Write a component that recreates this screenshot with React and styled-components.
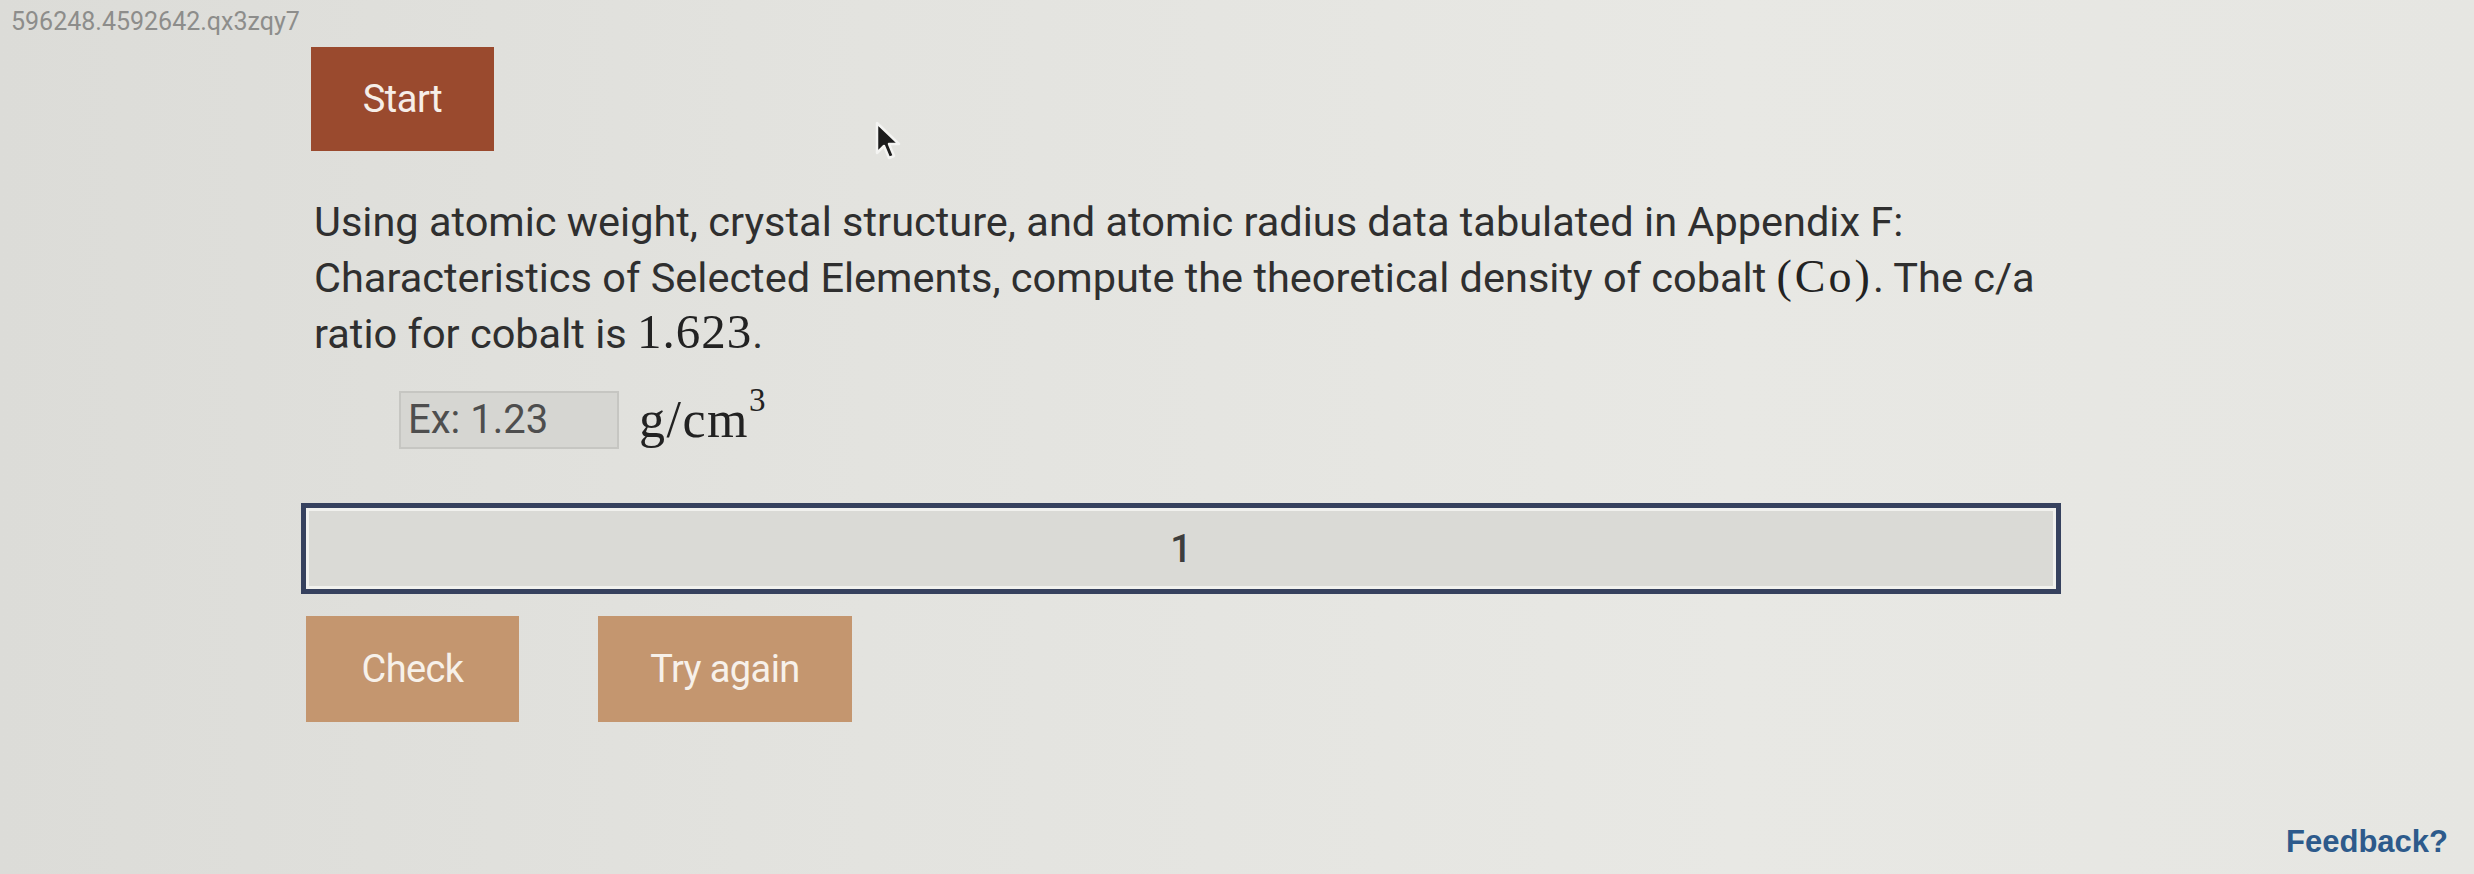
import React from "react";
import styled, { createGlobalStyle } from "styled-components";

const Global = createGlobalStyle`
  html, body { margin: 0; padding: 0; }
  body {
    background: #e3e3df;
    font-family: Roboto, "Liberation Sans", Arial, sans-serif;
  }
`;

const Page = styled.div`
  position: relative;
  width: 2474px;
  height: 874px;
  box-sizing: border-box;
  padding: 8px 26px 0 11px;
  overflow: hidden;
  background: linear-gradient(90deg, #dcdcd8 0%, #e3e3df 35%, #e8e8e4 70%, #e6e6e2 100%);
  display: flex;
  flex-direction: column;
`;

const Ident = styled.div`
  font-size: 25px;
  line-height: 28px;
  color: #8d8d8b;
`;

const Content = styled.main`
  display: flex;
  flex-direction: column;
  align-items: flex-start;
  padding-left: 295px;
`;

const StartButton = styled.button`
  margin: 11px 0 0 5px;
  width: 183px;
  height: 104px;
  border: none;
  background: #9a4a2e;
  color: #f6eee8;
  font-family: inherit;
  font-size: 38px;
  letter-spacing: -0.5px;
  cursor: pointer;
`;

const Question = styled.p`
  margin: 43px 0 0 8px;
  width: 1750px;
  font-size: 41.5px;
  line-height: 56px;
  color: #2f2f2f;
`;

const MathText = styled.span`
  font-family: "Liberation Serif", "DejaVu Serif", serif;
  font-size: ${(p) => p.$size || 45}px;
  line-height: 1;
  letter-spacing: ${(p) => p.$spacing || 0.5}px;
  color: #222;
`;

const AnswerRow = styled.div`
  margin: 28px 0 0 93px;
  display: flex;
  align-items: center;
  gap: 20px;
`;

const AnswerInput = styled.input`
  box-sizing: border-box;
  width: 220px;
  height: 58px;
  padding: 0 7px;
  border: 2px solid #c6c6c2;
  background: #d6d6d2;
  font-family: Roboto, sans-serif;
  font-size: 40px;
  color: #4a4a4a;
  outline: none;
  &::placeholder { color: #4e4e4e; }
`;

const Unit = styled.span`
  font-family: "Liberation Serif", "DejaVu Serif", serif;
  font-size: 52px;
  color: #222;
  letter-spacing: 1.5px;
  sup {
    font-size: 33px;
    vertical-align: 26px;
    line-height: 0;
  }
`;

const AttemptBar = styled.div`
  margin: 54px 0 0 -5px;
  box-sizing: border-box;
  width: 1760px;
  height: 91px;
  border: 5px solid #36415e;
  box-shadow: inset 0 0 0 3px #f1f1ee;
  background: #dadad6;
  display: flex;
  align-items: center;
  justify-content: center;
  font-size: 38px;
  font-weight: 500;
  color: #3d3d3d;
`;

const Actions = styled.div`
  margin-top: 22px;
  display: flex;
  gap: 79px;
`;

const ActionButton = styled.button`
  width: ${(p) => p.$w}px;
  height: 106px;
  border: none;
  background: #c4966f;
  color: #f7f1ea;
  font-family: inherit;
  font-size: 38px;
  letter-spacing: -0.6px;
  cursor: pointer;
`;

const Footer = styled.footer`
  margin-top: 101px;
  display: flex;
  justify-content: flex-end;
`;

const FeedbackLink = styled.a`
  font-family: "Liberation Sans", Arial, sans-serif;
  font-size: 31px;
  line-height: 38px;
  font-weight: 700;
  color: #2d5a8b;
  text-decoration: none;
`;

const Pointer = styled.svg`
  position: absolute;
  left: 873px;
  top: 120px;
  width: 30px;
  height: 44px;
`;

export default function App() {
  return (
    <>
      <Global />
      <Page>
        <Ident>596248.4592642.qx3zqy7</Ident>
        <Content>
          <StartButton>Start</StartButton>
          <Question>
            Using atomic weight, crystal structure, and atomic radius data tabulated in Appendix F:
            Characteristics of Selected Elements, compute the theoretical density of cobalt{" "}
            <MathText $size={46} $spacing={3}>(Co)</MathText>. The c/a ratio for cobalt is{" "}
            <MathText $size={49} $spacing={1}>1.623</MathText>.
          </Question>
          <AnswerRow>
            <AnswerInput placeholder="Ex: 1.23" />
            <Unit>
              g/cm<sup>3</sup>
            </Unit>
          </AnswerRow>
          <AttemptBar>1</AttemptBar>
          <Actions>
            <ActionButton $w={213}>Check</ActionButton>
            <ActionButton $w={254}>Try again</ActionButton>
          </Actions>
        </Content>
        <Footer>
          <FeedbackLink href="#">Feedback?</FeedbackLink>
        </Footer>
        <Pointer viewBox="0 0 30 44">
          <path
            d="M4 3 L4 33 L11 26 L16 38 L21 36 L16 24 L26 24 Z"
            fill="#1c1c1c"
            stroke="#f4f4f2"
            strokeWidth="2.5"
            strokeLinejoin="round"
          />
        </Pointer>
      </Page>
    </>
  );
}
